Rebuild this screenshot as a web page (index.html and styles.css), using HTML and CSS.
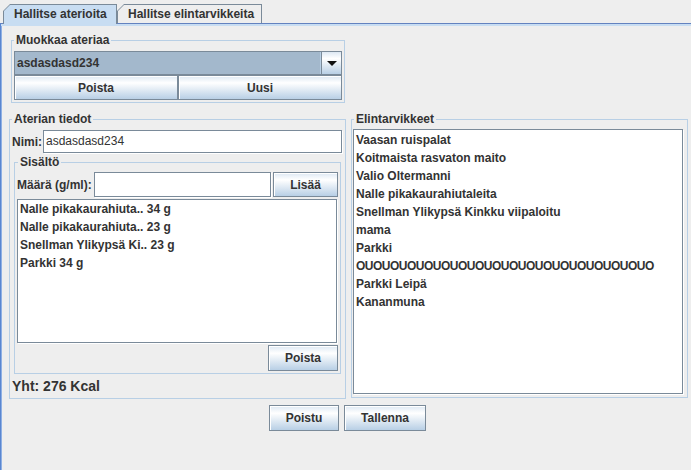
FILE: index.html
```html
<!DOCTYPE html>
<html lang="fi">
<head>
<meta charset="utf-8">
<title>Ateriat</title>
<link rel="stylesheet" href="styles.css">
</head>
<body>
<div class="tabbar">
  <div class="tab tab-selected"><span class="tab-face">Hallitse aterioita</span></div>
  <div class="tab tab-other"><span class="tab-face">Hallitse elintarvikkeita</span></div>
</div>
<div class="pane">
  <fieldset class="group group-edit">
    <legend>Muokkaa ateriaa</legend>
    <div class="combo">
      <span class="combo-value">asdasdasd234</span>
      <span class="combo-arrow"><svg width="10" height="6" viewBox="0 0 10 6"><polygon points="0,0 10,0 5,5" fill="#111"/></svg></span>
    </div>
    <div class="btn-pair">
      <button class="btn">Poista</button>
      <button class="btn">Uusi</button>
    </div>
  </fieldset>

  <div class="columns">
    <fieldset class="group group-meal">
      <legend>Aterian tiedot</legend>
      <div class="field-row row-name">
        <label class="lbl">Nimi:</label>
        <div class="textfield">asdasdasd234</div>
      </div>
      <fieldset class="group group-contents">
        <legend>Sisältö</legend>
        <div class="field-row row-amount">
          <label class="lbl">Määrä (g/ml):</label>
          <div class="textfield"></div>
          <button class="btn btn-add">Lisää</button>
        </div>
        <ul class="list list-contents">
          <li>Nalle pikakaurahiuta.. 34 g</li>
          <li>Nalle pikakaurahiuta.. 23 g</li>
          <li>Snellman Ylikypsä Ki.. 23 g</li>
          <li>Parkki 34 g</li>
        </ul>
        <div class="row-end"><button class="btn btn-remove">Poista</button></div>
      </fieldset>
      <div class="total">Yht: 276 Kcal</div>
    </fieldset>

    <fieldset class="group group-foods">
      <legend>Elintarvikkeet</legend>
      <ul class="list list-foods">
        <li>Vaasan ruispalat</li>
        <li>Koitmaista rasvaton maito</li>
        <li>Valio Oltermanni</li>
        <li>Nalle pikakaurahiutaleita</li>
        <li>Snellman Ylikypsä Kinkku viipaloitu</li>
        <li>mama</li>
        <li>Parkki</li>
        <li class="item-long">OUOUOUOUOUOUOUOUOUOUOUOUOUOUOUOUOUO</li>
        <li>Parkki Leipä</li>
        <li>Kananmuna</li>
      </ul>
    </fieldset>
  </div>

  <div class="actions">
    <button class="btn btn-exit">Poistu</button>
    <button class="btn btn-save">Tallenna</button>
  </div>
</div>
</body>
</html>
```
FILE: styles.css
```css
html, body {
  margin: 0;
  padding: 0;
}
body {
  width: 691px;
  height: 470px;
  overflow: hidden;
  background: #eeeeee;
  font-family: "Liberation Sans", Arial, sans-serif;
  font-size: 12px;
  font-weight: bold;
  color: #333333;
}

/* ---------- tabs ---------- */
.tabbar {
  display: flex;
  align-items: flex-end;
  height: 23px;
  padding-left: 3px;
}
.tab {
  box-sizing: border-box;
  height: 19px;
  padding: 1px 1px 0 1px;
  background: #7a8a99;
  clip-path: polygon(0 7px, 7px 0, 100% 0, 100% 100%, 0 100%);
}
.tab-face {
  display: block;
  height: 18px;
  line-height: 18px;
  padding-left: 10px;
  background: #eeeeee;
  white-space: nowrap;
  clip-path: polygon(0 6px, 6px 0, 100% 0, 100% 100%, 0 100%);
}
.tab-selected {
  width: 114px;
  height: 20px;
  margin-bottom: -1px;
  position: relative;
  z-index: 1;
}
.tab-selected .tab-face {
  height: 19px;
  background: #c8ddf2;
}
.tab-other {
  width: 145px;
}

/* ---------- pane ---------- */
.pane {
  box-sizing: border-box;
  height: 447px;
  border-top: 1px solid #6382bf;
  border-left: 1px solid #5a86d0;
  box-shadow: inset 0 2px 0 #c8ddf2, inset 1px 0 0 #8fb0e4;
  padding: 9px 3px 0 8px;
}

/* ---------- titled groups ---------- */
.group {
  margin: 0;
  min-width: 0;
  box-sizing: border-box;
  border: 1px solid #b8cfe5;
}
.group > legend {
  padding: 0 2px;
  margin: 0;
  line-height: 15px;
  font-size: 12px;
  font-weight: bold;
  color: #333333;
}

.group-edit {
  width: 334px;
  margin-left: 2px;
  padding: 3px 2px 2px 2px;
}

.combo {
  display: flex;
  height: 24px;
  box-sizing: border-box;
  border: 1px solid #7a8a99;
}
.combo-value {
  flex: 1;
  background: #a3b8cc;
  padding-left: 2px;
  line-height: 22px;
  box-shadow: inset -1px 0 0 #b8cfe5;
}
.combo-arrow {
  width: 19px;
  border-left: 1px solid #7a8a99;
  background: linear-gradient(#dde8f3, #ffffff 30%, #b8cfe5);
  display: flex;
  align-items: center;
  justify-content: center;
}
.combo-arrow svg {
  display: block;
  margin-top: 1px;
}

.btn-pair {
  display: grid;
  grid-template-columns: 1fr 1fr;
}

.btn {
  box-sizing: border-box;
  margin: 0;
  padding: 0;
  font-family: inherit;
  font-size: 12px;
  font-weight: bold;
  color: #333333;
  border: 1px solid #7a8a99;
  background: linear-gradient(#dde8f3, #ffffff 30%, #b8cfe5);
  box-shadow: inset 1px 1px 0 #ffffff;
  height: 25px;
}

/* ---------- columns ---------- */
.columns {
  display: grid;
  grid-template-columns: 337px 337px;
  column-gap: 5px;
  align-items: start;
  margin-top: 9px;
}

.group-meal {
  padding: 3px 2px 4px 2px;
}

.field-row {
  display: flex;
  align-items: center;
  gap: 2px;
}
.row-name {
  height: 23px;
  gap: 1px;
}
.row-amount {
  height: 25px;
}
.lbl {
  white-space: nowrap;
}
.textfield {
  flex: 1;
  align-self: stretch;
  box-sizing: border-box;
  border: 1px solid #7a8a99;
  box-shadow: 1px 1px 0 #ffffff;
  background: #ffffff;
  padding-left: 2px;
  font-weight: normal;
  line-height: 21px;
  margin-right: 1px;
}
.row-amount .textfield {
  line-height: 23px;
}
.btn-add {
  width: 65px;
  margin-left: -1px;
}

.group-contents {
  width: 327px;
  margin: 2px 0 0 2px;
  padding: 2px 2px 2px 2px;
}
.group-contents > legend {
  margin-left: 1px;
}

.list {
  list-style: none;
  margin: 0;
  padding: 0 0 0 2px;
  box-sizing: border-box;
  background: #ffffff;
  border: 1px solid #7a8a99;
  box-shadow: 1px 1px 0 #ffffff;
  overflow: hidden;
}
.list li {
  line-height: 18px;
  white-space: nowrap;
}
.list .item-long {
  letter-spacing: -0.5px;
}
.list-contents {
  height: 144px;
  margin: 2px 1px 0 0;
}

.row-end {
  display: flex;
  justify-content: flex-end;
  margin-top: 2px;
}
.btn-remove {
  width: 70px;
  height: 26px;
}

.total {
  margin-top: 4px;
  font-size: 14px;
  line-height: 16px;
}

.group-foods {
  height: 286px;
  padding: 2px 4px 4px 1px;
}
.group-foods > legend {
  margin-left: 1px;
}
.list-foods {
  height: 265px;
  padding-top: 1px;
}

/* ---------- bottom actions ---------- */
.actions {
  display: flex;
  justify-content: center;
  gap: 5px;
  margin-top: 6px;
  padding-right: 2px;
}
.btn-exit {
  width: 70px;
  height: 26px;
}
.btn-save {
  width: 82px;
  height: 26px;
}
```
